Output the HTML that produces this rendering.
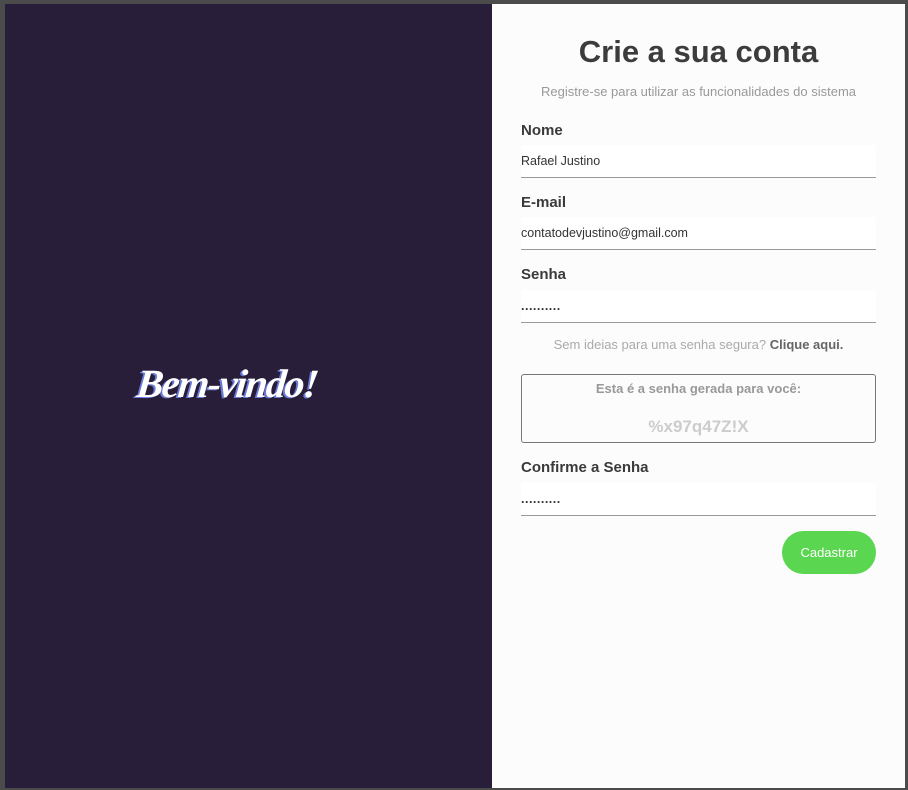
<!DOCTYPE html>
<html><head><style>
*{box-sizing:border-box;margin:0;padding:0}
body{width:908px;height:790px;background:#4b4b4b;position:relative;overflow:hidden;font-family:"Liberation Sans",sans-serif}
.left{position:absolute;left:5px;top:4px;width:487px;height:784px;background:#281e3a}
.left h1{position:absolute;left:132px;top:356px;color:#fff;font-family:"Liberation Serif",serif;font-style:italic;font-weight:bold;font-size:40px;letter-spacing:-1.5px;transform:skewX(-6deg);text-shadow:-2px 1px 0 #6a7ad8}
.right{position:absolute;left:492px;top:4px;width:413px;height:784px;background:#fcfcfc}
.t{position:absolute;width:413px;text-align:center}
label{position:absolute;left:29px;font-size:15px;font-weight:bold;color:#3a3a3a}
.in{position:absolute;left:29px;width:355px;height:33px;background:#fff;border-bottom:1px solid #999;font-size:12.5px;color:#333;padding:9px 0 0 0}
.box{position:absolute;left:29px;top:370px;width:355px;height:69px;border:1px solid #777;border-radius:3px}
.btn{position:absolute;left:290px;top:527px;width:94px;height:43px;border-radius:22px;background:#5bd651;color:#fff;font-size:13px;text-align:center;line-height:43px}
</style></head><body>
<div class="left"><h1>Bem-vindo!</h1></div>
<div class="right">
<div class="t" style="top:30px;font-size:31px;font-weight:bold;color:#3c3c3c">Crie a sua conta</div>
<div class="t" style="top:80px;font-size:13px;color:#999">Registre-se para utilizar as funcionalidades do sistema</div>
<label style="top:118px">Nome</label>
<div class="in" style="top:141px">Rafael Justino</div>
<label style="top:190px">E-mail</label>
<div class="in" style="top:213px">contatodevjustino@gmail.com</div>
<label style="top:262px">Senha</label>
<div class="in" style="top:286px;font-weight:bold;letter-spacing:0.5px">..........</div>
<div class="t" style="top:333px;font-size:13px;color:#aaa">Sem ideias para uma senha segura? <b style="color:#666">Clique aqui.</b></div>
<div class="box">
<div style="position:absolute;top:6px;width:100%;text-align:center;font-size:13px;font-weight:bold;color:#999">Esta é a senha gerada para você:</div>
<div style="position:absolute;top:42px;width:100%;text-align:center;font-size:17px;font-weight:bold;color:#ccc">%x97q47Z!X</div>
</div>
<label style="top:455px">Confirme a Senha</label>
<div class="in" style="top:479px;font-weight:bold;letter-spacing:0.5px">..........</div>
<div class="btn">Cadastrar</div>
</div>
</body></html>
